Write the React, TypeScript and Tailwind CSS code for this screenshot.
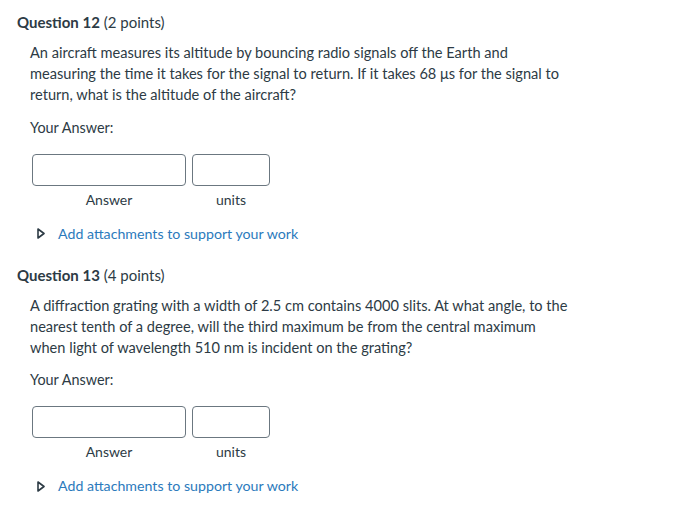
import React from 'react'

function AnswerBlock() {
  return (
    <div className="mt-[16px]">
      <div className="flex gap-[6px] pl-[2px]">
        <div className="flex flex-col items-center">
          <div className="h-[32px] w-[154px] rounded-[4px] border border-[#6b7780] bg-white" />
          <span className="mt-[4px] text-[14px] leading-[20px]">Answer</span>
        </div>
        <div className="flex flex-col items-center">
          <div className="h-[32px] w-[78px] rounded-[4px] border border-[#6b7780] bg-white" />
          <span className="mt-[4px] text-[14px] leading-[20px]">units</span>
        </div>
      </div>
      <div className="mt-[14px] flex items-center gap-[13px] pl-[7px]">
        <svg width="8" height="11" viewBox="0 0 8 11" className="text-[#2d3b45]">
          <path d="M1 1 L7 5.5 L1 10 Z" fill="none" stroke="currentColor" strokeWidth="1.6" strokeLinejoin="round" />
        </svg>
        <span className="text-[14.2px] leading-[20px] text-[#2b7abc]">Add attachments to support your work</span>
      </div>
    </div>
  )
}

function Question({ num, points, lines }: { num: number; points: number; lines: string[] }) {
  return (
    <section>
      <h2 className="text-[15px] leading-[20px] text-[#2d3b45]">
        <span className="font-bold">Question {num}</span> ({points} points)
      </h2>
      <div className="pl-[13px]">
        <p className="mt-[10px] text-[14.6px] leading-[21.2px]">
          {lines.map((l, i) => (
            <React.Fragment key={i}>
              {l}
              {i < lines.length - 1 && <br />}
            </React.Fragment>
          ))}
        </p>
        <p className="mt-[12px] text-[14.4px] leading-[20px]">Your Answer:</p>
        <AnswerBlock />
      </div>
    </section>
  )
}

export default function App() {
  return (
    <div className="min-h-screen bg-white px-[17px] pt-[12px] text-[#2d3b45]" style={{ fontFamily: 'Lato, "Open Sans", sans-serif' }}>
      <Question
        num={12}
        points={2}
        lines={[
          'An aircraft measures its altitude by bouncing radio signals off the Earth and',
          'measuring the time it takes for the signal to return. If it takes 68 μs for the signal to',
          'return, what is the altitude of the aircraft?',
        ]}
      />
      <div className="mt-[21px]">
        <Question
          num={13}
          points={4}
          lines={[
            'A diffraction grating with a width of 2.5 cm contains 4000 slits. At what angle, to the',
            'nearest tenth of a degree, will the third maximum be from the central maximum',
            'when light of wavelength 510 nm is incident on the grating?',
          ]}
        />
      </div>
    </div>
  )
}
